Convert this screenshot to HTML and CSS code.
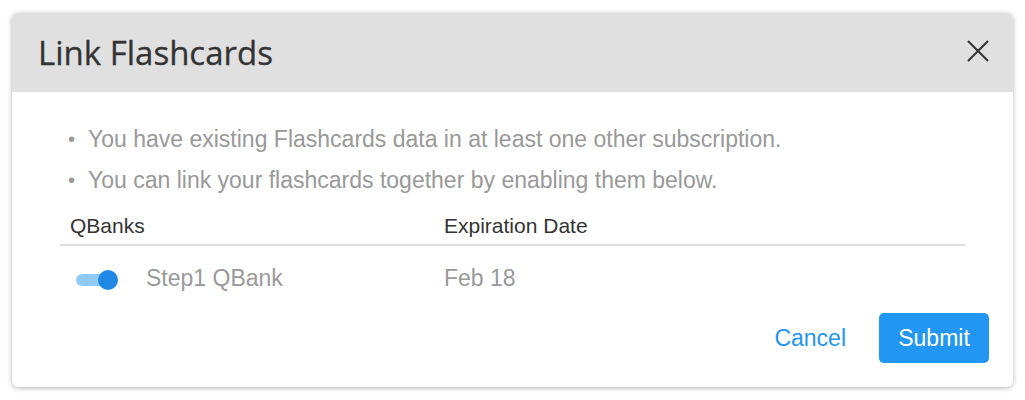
FILE: index.html
```html
<!DOCTYPE html>
<html lang="en">
<head>
    <meta charset="UTF-8">
    <title>Link Flashcards</title>
    <link rel="stylesheet" href="styles.css">
</head>
<body>
    <div class="dialog">
        <div class="dialog-header">
            <h2>Link Flashcards</h2>
            <button class="close" aria-label="Close">
                <svg width="22" height="22" viewBox="0 0 22 22"><path d="M1 1L21 21M21 1L1 21" stroke="#333" stroke-width="2" fill="none"/></svg>
            </button>
        </div>
        <div class="dialog-body">
            <ul class="notes">
                <li>You have existing Flashcards data in at least one other subscription.</li>
                <li>You can link your flashcards together by enabling them below.</li>
            </ul>
            <div class="table">
                <div class="row head">
                    <div class="col-name">QBanks</div>
                    <div class="col-date">Expiration Date</div>
                </div>
                <div class="row">
                    <div class="col-name">
                        <span class="toggle"><span class="thumb"></span></span>
                        Step1 QBank
                    </div>
                    <div class="col-date">Feb 18</div>
                </div>
            </div>
            <div class="actions">
                <button class="btn-text">Cancel</button>
                <button class="btn-primary">Submit</button>
            </div>
        </div>
    </div>
</body>
</html>
```
FILE: styles.css
```css
body {
    margin: 0;
    padding: 13px 12px;
    background: #fff;
    font-family: "Liberation Sans", Arial, sans-serif;
}
.dialog {
    width: 1001px;
    height: 374px;
    box-sizing: border-box;
    border-radius: 6px;
    overflow: hidden;
    background: #fff;
    box-shadow: 0 1px 5px rgba(0, 0, 0, 0.3);
}
.dialog-header {
    height: 79px;
    background: #e0e0e0;
    display: flex;
    align-items: center;
    justify-content: space-between;
    padding: 0 24px 0 26px;
}
.dialog-header h2 {
    margin: 0 0 0 0;
    font-family: "Open Sans", sans-serif;
    font-weight: 400;
    font-size: 33px;
    color: #333;
    -webkit-text-stroke: 0.3px #333;
}
.close {
    border: 0;
    background: none;
    padding: 0;
    width: 22px;
    height: 22px;
    margin-top: -4px;
}
.dialog-body {
    padding: 0 24px 0 48px;
}
.notes {
    margin: 0;
    padding: 27px 0 0 0;
    list-style: none;
    color: #999;
    font-size: 23px;
}
.notes li {
    line-height: 41px;
    padding-left: 28px;
    position: relative;
}
.notes li::before {
    content: "\2022";
    position: absolute;
    left: 8px;
    font-size: 20px;
}
.table {
    margin-top: 10px;
    width: 905px;
}
.row {
    display: flex;
    font-size: 23px;
    color: #999;
}
.row.head {
    color: #333;
    font-size: 21px;
    height: 33px;
    line-height: 30px;
    border-bottom: 2px solid #ddd;
}
.row:not(.head) {
    height: 64px;
    align-items: center;
}
.col-name {
    width: 374px;
    padding-left: 10px;
    display: flex;
    align-items: center;
}
.row.head .col-name, .row.head .col-date {
    display: block;
}
.toggle {
    display: inline-block;
    width: 37px;
    height: 12px;
    border-radius: 6px;
    background: #90caf9;
    position: relative;
    margin: 4px 33px 0 6px;
}
.thumb {
    position: absolute;
    right: -5px;
    top: -4px;
    width: 20px;
    height: 20px;
    border-radius: 50%;
    background: #1e88e5;
}
.actions {
    display: flex;
    justify-content: flex-end;
    align-items: center;
    gap: 33px;
    margin-top: 3px;
}
.btn-text {
    border: 0;
    background: none;
    color: #2196f3;
    font: 23px "Liberation Sans", Arial, sans-serif;
    padding: 0;
}
.btn-primary {
    border: 0;
    background: #2196f3;
    color: #fff;
    font: 23px "Liberation Sans", Arial, sans-serif;
    width: 110px;
    height: 50px;
    border-radius: 5px;
}
```
